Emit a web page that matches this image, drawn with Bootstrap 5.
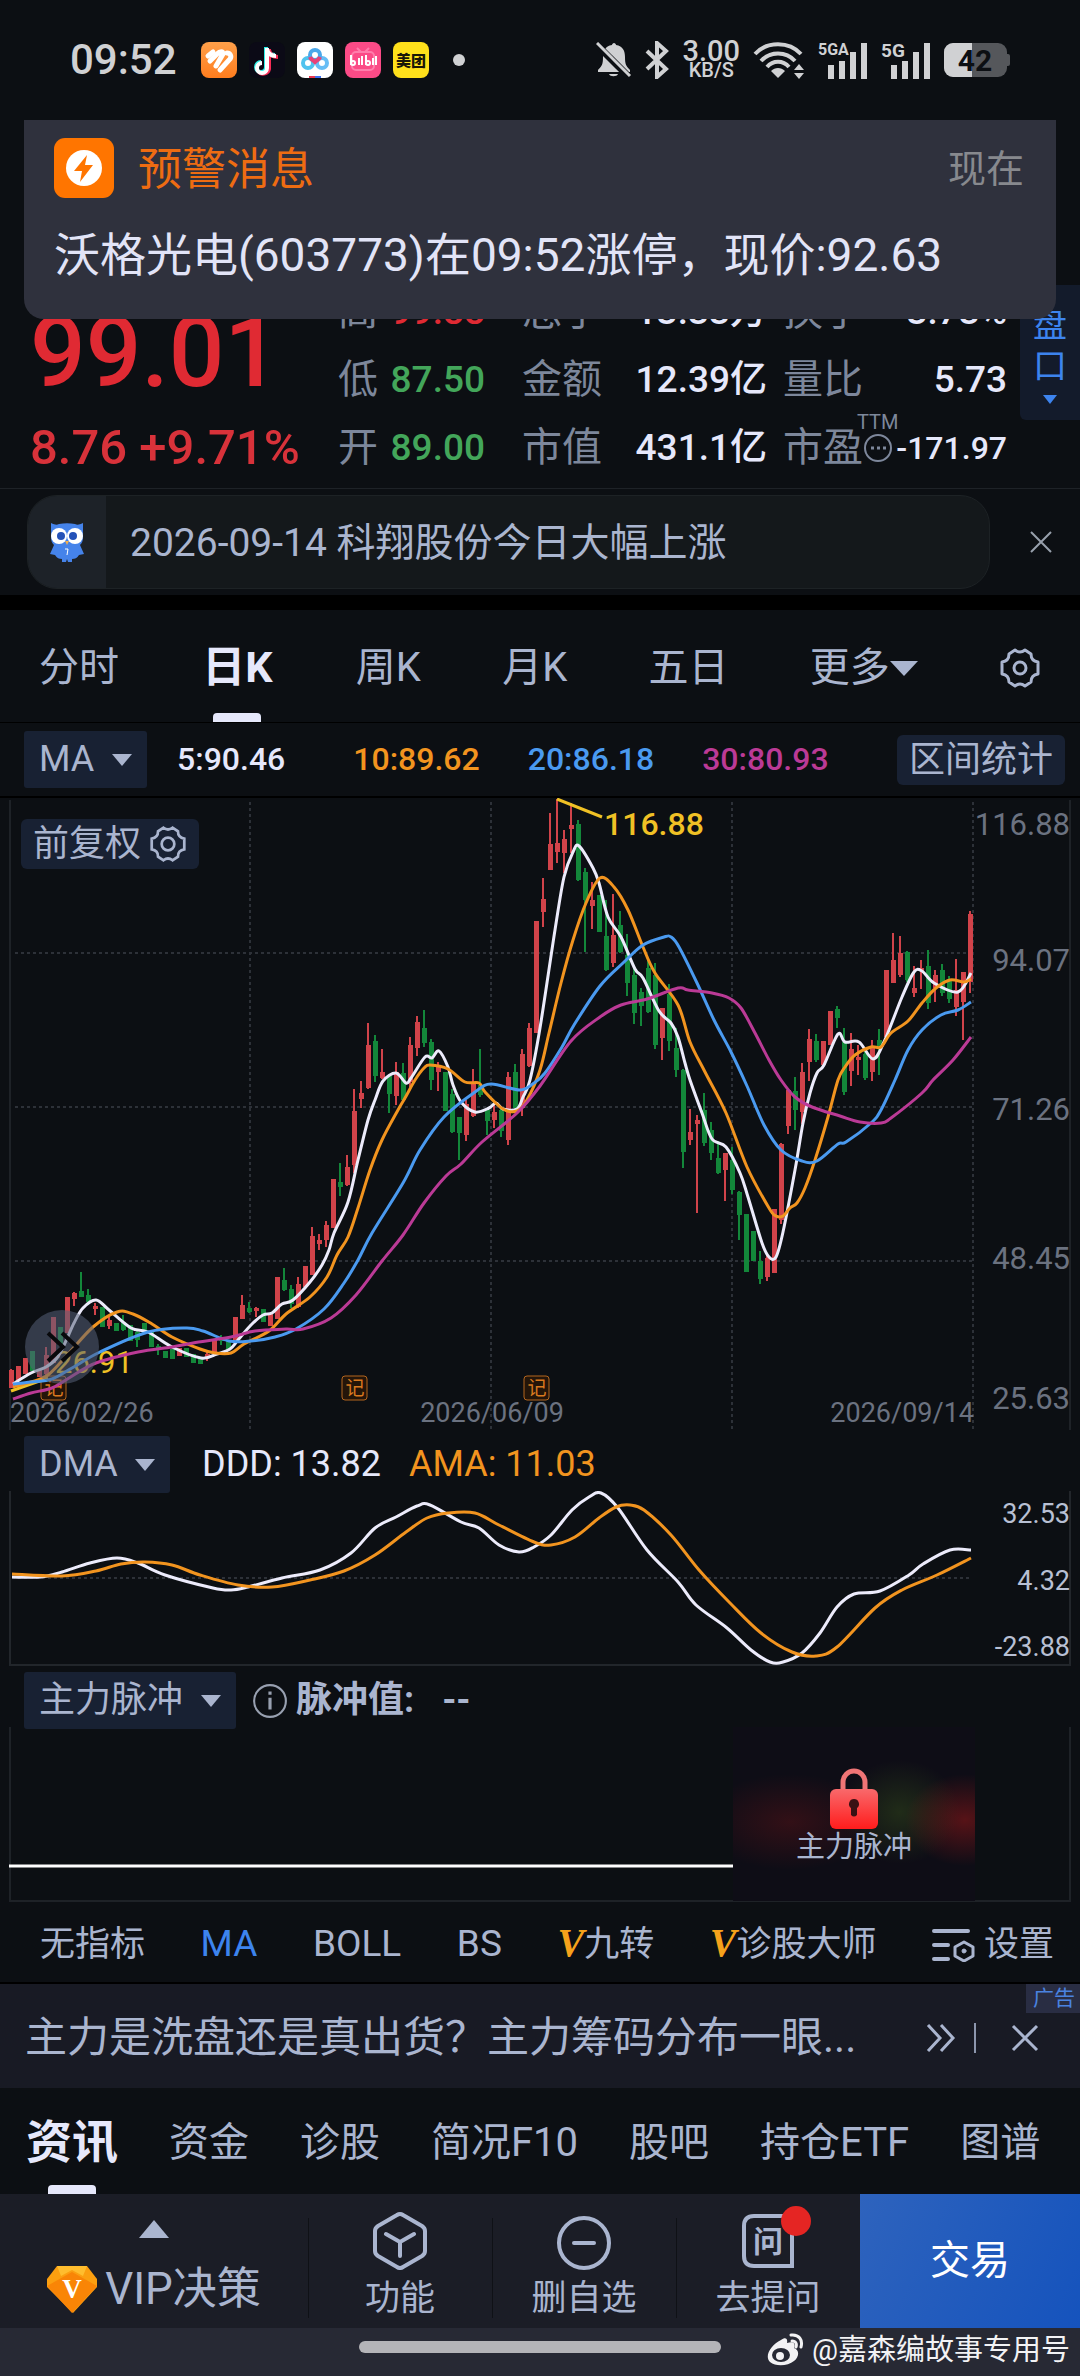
<!DOCTYPE html>
<html lang="zh-CN" data-bs-theme="dark">
<head>
<meta charset="utf-8">
<meta name="viewport" content="width=device-width, initial-scale=1">
<title>日K 行情</title>
<link href="https://cdn.jsdelivr.net/npm/bootstrap@5.3.0/dist/css/bootstrap.min.css" rel="stylesheet">
<style>
:root{--ink:#e6e8fb;--soft:#aab5cf;--dim:#7d879b;--axis:#6b7280;--up:#e02a33;--down:#43a65a;--amber:#f2941f;--sky:#4a9af0;--rose:#bb3a96;--chip:#182133;--line:#1e2227}
body{background:#0c0f13;color:var(--soft);font-family:Roboto,"Noto Sans CJK SC",sans-serif;font-size:40px;line-height:1.2}
a{color:inherit;text-decoration:none}
button{color:inherit}
svg{display:block;flex:none}
.plot svg{width:100%;height:auto}
.statusbar{height:120px;padding:0 70px;color:#d0d1d3}
.clock{font-size:42px;font-weight:500}
.speed{font-size:29px;line-height:20px;font-weight:500;text-align:center}
.speed small{font-size:20px;line-height:18px;display:block;font-weight:500}
.notice{top:120px;left:24px;right:24px;height:199px;background:#2f313d;border-radius:0 0 20px 20px;padding:18px 32px 0 30px;z-index:5}
.notice-title{color:#ee6c12;font-size:44px}
.notice-time{color:#87898e;font-size:38px}
.notice-text{color:#e2e4f7;font-size:46px;line-height:56px;margin-top:29px}
.quote{padding:158px 0 6px 30px;border-bottom:1px solid var(--line)}
.quote-grid{display:grid;grid-template-columns:308fr 184fr 261fr 224fr;grid-auto-rows:68px;align-items:center;margin-right:13px}
.price{grid-row:span 2;align-self:end;color:var(--up);font-size:98px;font-weight:500;line-height:68px;padding-bottom:27px}
.change{color:#d8323a;font-size:49px;font-weight:500;white-space:pre}
.pair{display:flex;justify-content:space-between;align-items:center;color:var(--dim);white-space:nowrap}
.pair b{font-size:37px;font-weight:500;color:var(--ink)}
.pair .tiny{font-size:32px}
.pe-a{padding-right:37px}.pe-b{padding-right:16px}
.red b{color:var(--up)}.green b{color:var(--down)}
.ttm{top:-14px;left:74px;font-size:20px}
.handicap{width:60px;align-self:stretch;margin-top:7px;margin-bottom:62px;background:#131b2b;color:#3d84ee;border:0;border-radius:0 0 0 6px;font-size:34px;line-height:41px;padding:4px 12px 0}
.tip{padding:6px 24px 6px 27px;border-bottom:15px solid #000}
.tip-pill{height:94px;border-radius:30px;background:#14181b;border:1px solid #1d2225;overflow:hidden;margin-right:36px}
.tip-owl{width:78px;background:#1d2228}
.tip-pill a{font-size:39px;margin-top:3px}
.tabs{height:113px;padding:4px 39px 0;border-bottom:1px solid #000}
.tabs a,.subtabs a{position:relative;height:100%;display:flex;align-items:center}
.tabs .active{color:var(--ink);font-size:43px;font-weight:700;padding:0 2px}
.active::after{content:"";position:absolute;left:50%;bottom:0;width:48px;height:9px;margin-left:-24px;border-radius:4px 4px 0 0;background:var(--ink)}
.marow{height:75px;padding:0 15px 0 24px;border-bottom:2px solid #000;font-size:32px;font-weight:500;gap:48px}
.ma-first{margin:0 20px 0 -18px}
.picker{background-color:var(--chip);border:0;border-radius:3px;color:var(--soft);width:auto;height:57px;font-size:36px;line-height:45px;padding:6px 52px 6px 15px;background-image:url("data:image/svg+xml,%3Csvg xmlns='http://www.w3.org/2000/svg' viewBox='0 0 20 12'%3E%3Cpath d='M0 0h20L10 12z' fill='%23aab5cf'/%3E%3C/svg%3E")!important;background-size:20px 12px;background-position:right 15px center}
.chip{background:var(--chip);border:0;border-radius:6px;font-size:36px;line-height:50px;padding:0 12px;font-weight:400}
.adjust{top:21px;left:21px;height:50px;z-index:2}
.c-amber{color:var(--amber)}.c-sky{color:var(--sky)}.c-rose{color:var(--rose)}.c-ink{color:var(--ink)}.c-blue{color:#3d84ee}
.subrow{padding:6px 24px 0;font-size:36px;margin-bottom:-2px;position:relative}
.indicators{height:82px;padding:5px 26px 0 40px;font-size:35px;border-bottom:2px solid #000}
.latin{font-size:37px}
.vee{font:italic 700 40px/1 "Liberation Serif",serif;color:#f6a21b}
.promo{height:104px;background:#181a24;padding:4px 40px 0 25px;font-size:42px}
.adtag{top:0;right:0;background:#292d43;color:#4a83e0;font-size:21px;line-height:29px;padding:0 5px 0 7px}
.subtabs{height:106px;padding:4px 0 0 26px;gap:51px;white-space:nowrap}
.subtabs .active{font-size:46px;font-weight:700;color:var(--ink)}
.dock{background:#1b1d26;height:134px}
.dock button{border:0;background:none;padding:0;display:flex;flex-direction:column;align-items:center;position:relative}
.dock button+button:not(.trade)::before{content:"";position:absolute;left:0;top:24px;bottom:10px;width:1px;background:#0f1116}
.vip{flex:308 1 0;font-size:44px;line-height:50px}
.tool{flex:184 1 0;font-size:35px;line-height:42px}
.trade{flex:220 1 0;justify-content:center;color:#fff;font-size:40px;background:linear-gradient(115deg,#2e63bd,#1553bd)!important}
.dot{width:30px;height:30px;background:#e52523;border-radius:50%;left:57%;top:12px}
.homebar{height:48px;background:#272934}
.handle{width:362px;height:12px;border-radius:6px;background:#b4b4b8;left:50%;top:13px;margin-left:-181px}
.credit{color:#f2f2f4;font-size:29px;right:10px;top:5px;gap:8px}
</style>
</head>
<body>
<main class="position-relative">

<header class="statusbar d-flex align-items-center">
  <span class="clock me-auto d-flex align-items-center gap-4">09:52
    <span class="d-flex align-items-center" style="gap:12px">
      <svg width="36" height="36" viewBox="0 0 36 36"><defs><linearGradient id="og" x2="0" y2="1"><stop stop-color="#ffa04a"/><stop offset="1" stop-color="#ff7d1e"/></linearGradient></defs><rect width="36" height="36" rx="8" fill="url(#og)"/><g stroke="#fff" stroke-width="5" stroke-linecap="round" fill="none"><path d="M7 14 12 10"/><path d="M9 19 16 12c3-3 6-3 6 0L15 24"/><path d="M19 28 29 17c2-3 0-6-3-6"/></g></svg>
      <svg width="36" height="36" viewBox="0 0 36 36"><rect width="36" height="36" rx="8" fill="#0b0a16"/><g fill="none" stroke-width="4"><path d="M17 5v20a5 5 0 1 1-5-5M17 6c1 5 4 7 9 7" stroke="#2cf0e8"/><path d="M20 7v20a6 6 0 0 1-10 3M20 8c1 5 4 7 9 7" stroke="#f72c56"/><path d="M18 6v20a5 5 0 1 1-5-5M18 7c1 5 4 7 9 7" stroke="#fff"/></g></svg>
      <svg width="36" height="36" viewBox="0 0 36 36"><rect width="36" height="36" rx="8" fill="#fff"/><g fill="none" stroke-width="4"><circle cx="11" cy="21" r="5" stroke="#4fc3ee"/><circle cx="25" cy="21" r="5" stroke="#66bdf5"/><circle cx="18" cy="13" r="5" stroke="#4aa7ea"/><path d="M13 15c1 3 3 3 5 5 2-2 4-2 5-5" stroke="#e84278"/></g><path d="M12 34h6v2h-6z" fill="#e8384f"/><path d="M18 34h6v2h-6z" fill="#3b6ff0"/></svg>
      <svg width="36" height="36" viewBox="0 0 36 36"><rect width="36" height="36" rx="8" fill="#fb4b87"/><g fill="none" stroke="#ff7eac" stroke-width="2"><rect x="7" y="10" width="22" height="18" rx="4"/><path d="m12 6 4 4m8-4-4 4"/></g><g stroke="#fff" stroke-width="2" fill="none"><path d="M6 13v10M14 16v7M17 14v9M21 13v10M28 16v7M31 14v9"/><circle cx="8" cy="21" r="2"/><circle cx="23" cy="21" r="2"/></g></svg>
      <svg width="36" height="36" viewBox="0 0 36 36"><rect width="36" height="36" rx="8" fill="#ffe01b"/><text x="18" y="24" font-size="15" font-weight="900" text-anchor="middle" fill="#1a1708">美团</text></svg>
    </span>
    <svg width="12" height="12"><circle cx="6" cy="6" r="6" fill="#d0d1d3"/></svg>
  </span>
  <span class="d-flex align-items-center" style="gap:13px">
    <svg width="36" height="36" viewBox="0 0 36 36" fill="#d0d1d3"><path d="M18 1c1 0 2 1 2 2 7 1 9 6 9 12 0 7 1 9 5 13v2H2v-2c4-4 5-6 5-13 0-6 2-11 9-12 0-1 1-2 2-2zM13 32h9c-1 3-8 3-9 0z"/><path d="M0 2 34 36" stroke="#0c0f13" stroke-width="7"/><path d="m1 1 33 33" stroke="#d0d1d3" stroke-width="3"/></svg>
    <svg width="24" height="38" viewBox="0 0 24 38" fill="none" stroke="#d0d1d3" stroke-width="4"><path d="m2 10 19 18-9 8V2l9 8L2 28"/></svg>
    <span class="speed">3.00<small>KB/S</small></span>
    <svg width="52" height="38" viewBox="0 0 52 38" fill="none" stroke="#d0d1d3" stroke-width="4"><path d="M2 13c12-13 34-13 46 0M8 20c9-10 25-10 34 0M14 26c6-7 16-7 22 0"/><path d="M25 37l-7-7c4-4 10-4 14 0z" fill="#d0d1d3" stroke="none"/><path d="m41 29 5-6 5 6zm0 3 5 6 5-6z" fill="#d0d1d3" stroke="none"/></svg>
    <svg width="50" height="38" viewBox="0 0 50 38" fill="#d0d1d3"><text x="0" y="14" font-size="16" font-weight="700" font-family="Roboto">5GA</text><path d="M10 24h6v14h-6zM21 20h6v18h-6zM32 11h6v27h-6zM43 2h6v36h-6z"/></svg>
    <svg width="50" height="38" viewBox="0 0 50 38" fill="#d0d1d3"><text x="0" y="16" font-size="19" font-weight="700" font-family="Roboto">5G</text><path d="M10 24h6v14h-6zM21 20h6v18h-6zM32 11h6v27h-6zM43 2h6v36h-6z"/></svg>
    <svg width="66" height="34" viewBox="0 0 66 34"><rect width="63" height="34" rx="9" fill="#55575b"/><path d="M62 11h2q2 0 2 2v8q0 2-2 2h-2z" fill="#55575b"/><path d="M9 0h19v34H9a9 9 0 0 1-9-9V9a9 9 0 0 1 9-9z" fill="#d0d1d3"/><text x="31" y="28" font-size="30" font-weight="700" text-anchor="middle" fill="#0c0f13">42</text></svg>
  </span>
</header>

<aside class="notice position-absolute">
  <div class="d-flex align-items-center">
    <svg width="60" height="60" viewBox="0 0 60 60"><rect width="60" height="60" rx="11" fill="#ff7500"/><circle cx="30" cy="30" r="18" fill="#fff"/><path d="M33 17 20 33h8l-2 11 13-17h-8z" fill="#ff7500"/></svg>
    <span class="notice-title ms-4 me-auto pt-1">预警消息</span>
    <span class="notice-time pt-1">现在</span>
  </div>
  <div class="notice-text text-nowrap">沃格光电(603773)在09:52涨停，现价:92.63</div>
</aside>

<section class="quote d-flex">
  <div class="quote-grid flex-grow-1">
    <div class="price">99.01</div>
    <div class="pair pe-a red">高<b>99.88</b></div>
    <div class="pair pe-b">总手<b>13.33万</b></div>
    <div class="pair">换手<b>3.73%</b></div>
    <div class="pair pe-a green">低<b>87.50</b></div>
    <div class="pair pe-b">金额<b>12.39亿</b></div>
    <div class="pair">量比<b>5.73</b></div>
    <div class="change">8.76 +9.71%</div>
    <div class="pair pe-a green">开<b>89.00</b></div>
    <div class="pair pe-b">市值<b>431.1亿</b></div>
    <div class="pair"><span class="position-relative d-flex align-items-center">市盈<span class="ttm position-absolute">TTM</span>
      <svg width="30" height="30" viewBox="0 0 30 30" fill="none" stroke="#7d879b" stroke-width="2"><circle cx="15" cy="15" r="13"/><path d="M8 15h3m3 0h3m3 0h3" stroke-width="3"/></svg></span><b class="tiny">-171.97</b></div>
  </div>
  <button class="handicap">盘口<svg class="mx-auto mt-2" width="14" height="9"><path d="M0 0h14L7 9z" fill="#3d84ee"/></svg></button>
</section>

<section class="tip d-flex align-items-center">
  <div class="tip-pill d-flex flex-grow-1">
    <span class="tip-owl d-flex align-items-center justify-content-center">
      <svg width="36" height="40" viewBox="0 0 36 40"><path d="M2 1c4 2 6 2 8 1 5-1 11-1 16 0 2 1 4 1 8-1v14c0 4-1 6-3 8l4 9-5 1c-2 3-4 4-7 4v3h-4l-1-3-1 3h-4v-3c-3 0-5-1-7-4l-5-1 4-9c-2-2-3-4-3-8z" fill="#4583ea"/><circle cx="10" cy="14" r="8" fill="#fff"/><circle cx="26" cy="14" r="8" fill="#fff"/><circle cx="12" cy="14" r="4" fill="#2452b8"/><circle cx="24" cy="14" r="4" fill="#2452b8"/><path d="m16 19 2 4 2-4z" fill="#f4b04f"/><path d="M16 27h3l-1 6" stroke="#fff" fill="none"/></svg>
    </span>
    <a class="d-flex align-items-center ms-4 text-nowrap" href="#">2026-09-14 科翔股份今日大幅上涨</a>
  </div>
  <button class="btn p-0 border-0" aria-label="关闭"><svg width="30" height="30" viewBox="0 0 30 30" stroke="#98a0ac" stroke-width="2"><path d="m5 5 20 20m0-20L5 25"/></svg></button>
</section>

<nav class="tabs d-flex justify-content-between align-items-center">
  <a href="#">分时</a><a href="#" class="active">日K</a><a href="#">周K</a><a href="#">月K</a><a href="#">五日</a>
  <a href="#">更多<svg width="28" height="15"><path d="M0 0h28L14 15z" fill="#aab5cf"/></svg></a>
  <a href="#" aria-label="设置"><svg width="42" height="42" viewBox="0 0 42 42" fill="none" stroke="#aab5cf" stroke-width="3" stroke-linejoin="round"><path id="cog" d="M16 3q5 4 10 0l6 4q0 7 7 8v12q-7 1-7 8l-6 4q-5-4-10 0l-6-4q0-7-7-8V15q7-1 7-8z"/><circle cx="21" cy="21" r="6"/></svg></a>
</nav>

<div class="marow d-flex align-items-center">
  <select class="form-select picker" aria-label="均线指标"><option>MA</option></select>
  <span class="c-ink ma-first">5:90.46</span><span class="c-amber">10:89.62</span><span class="c-sky">20:86.18</span><span class="c-rose">30:80.93</span>
  <button class="chip ms-auto">区间统计</button>
</div>

<section class="plot position-relative">
  <button class="chip adjust position-absolute d-flex align-items-center gap-2">前复权<svg style="width:38px" viewBox="0 0 42 42" fill="none" stroke="#aab5cf" stroke-width="3"><use href="#cog"/><circle cx="21" cy="21" r="7"/></svg></button>
  <svg id="kline" viewBox="0 798 1080 632" font-family="Roboto, 'Noto Sans CJK SC', sans-serif">
    <g stroke="#2d3138" stroke-width="2" stroke-dasharray="3 3"><path d="M15 953H973M15 1107H973M15 1261H973M250 802V1430M491 802V1430M732 802V1430M973 802V1430"/></g>
    <path d="M10 800V1430M1070 800V1430" stroke="#1e2227" stroke-width="2"/>
    <g fill="#6b7280" font-size="27"><text x="10" y="1422">2026/02/26</text><text x="492" y="1422" text-anchor="middle">2026/06/09</text><text x="974" y="1422" text-anchor="end">2026/09/14</text></g>
    <g fill="#6b7280" font-size="31" text-anchor="end"><text x="1070" y="835">116.88</text><text x="1070" y="971">94.07</text><text x="1070" y="1120">71.26</text><text x="1070" y="1269">48.45</text><text x="1070" y="1409">25.63</text></g>
    <g fill="#241509" stroke="#b3661f" stroke-width="1"><rect x="41" y="1376" width="25" height="24" rx="3"/><rect x="342" y="1376" width="25" height="24" rx="3"/><rect x="524" y="1376" width="25" height="24" rx="3"/></g>
    <g fill="#d9791f" font-size="19" text-anchor="middle"><text x="54" y="1395">记</text><text x="355" y="1395">记</text><text x="537" y="1395">记</text></g>
    <g id="candles"></g>
    <text x="55" y="1373" font-size="31" fill="#f0c125">26.91</text>
    <g fill="none" stroke-width="3" stroke-linejoin="round">
      <path d="M11 1391 48 1378" stroke="#f0c125"/>
      <polyline stroke="#ecebfb" points="13,1384 31,1373 46,1367 57,1358 65,1343 74,1323 83,1308 96,1300 109,1310 131,1328 148,1332 172,1347 201,1358 217,1354 230,1349 238,1340 251,1325 263,1315 272,1313 282,1304 293,1300 310,1282 322,1265 329,1250 334,1233 348,1202 358,1160 368,1120 375,1100 383,1081 396,1073 406,1083 411,1078 425,1057 432,1058 439,1051 448,1067 453,1085 461,1102 475,1112 489,1108 496,1103 503,1109 517,1109 523,1097 530,1080 540,1028 555,930 564,877 573,852 579,846 593,868 599,883 608,917 621,937 635,969 643,978 659,1011 671,1023 678,1037 685,1063 690,1080 702,1113 712,1139 726,1147 740,1173 748,1197 762,1243 769,1257 776,1257 783,1232 795,1170 803,1123 810,1093 817,1073 824,1065 838,1034 845,1042 859,1042 873,1059 884,1042 902,997 914,972 922,971 934,983 958,992 971,973"/>
      <polyline stroke="#f2941f" points="13,1387 31,1382 48,1375 69,1353 93,1327 117,1312 133,1314 152,1324 172,1337 200,1349 215,1353 231,1353 244,1344 269,1331 286,1314 310,1297 327,1277 337,1255 348,1237 358,1208 370,1170 382,1140 398,1110 405,1098 415,1080 424,1068 430,1065 448,1069 465,1082 479,1083 485,1092 503,1109 517,1111 527,1100 540,1070 549,1033 561,983 573,940 586,903 600,878 614,887 628,910 643,947 655,973 678,1005 690,1042 705,1072 726,1113 747,1167 769,1208 776,1216 783,1216 790,1208 797,1203 805,1188 815,1160 828,1117 838,1080 845,1067 855,1055 871,1047 881,1047 891,1033 908,1021 922,1003 936,988 950,980 964,982 971,979"/>
      <polyline stroke="#4a9af0" points="13,1384 31,1382 52,1379 72,1368 100,1352 148,1332 186,1328 203,1331 229,1341 251,1341 275,1337 296,1329 324,1309 344,1283 358,1260 372,1233 403,1183 420,1150 444,1117 475,1092 491,1084 520,1090 534,1083 545,1073 562,1047 574,1025 600,986 623,963 643,945 664,937 671,937 679,947 697,983 714,1020 731,1052 747,1086 764,1125 781,1150 802,1161 817,1161 838,1144 846,1142 871,1123 881,1110 895,1080 908,1050 922,1030 941,1015 958,1010 971,1002"/>
      <polyline stroke="#bb3a96" points="13,1399 31,1393 52,1388 69,1378 96,1363 138,1352 172,1347 193,1343 231,1337 255,1331 286,1329 303,1329 331,1318 356,1295 382,1261 403,1235 424,1203 446,1176 461,1164 482,1142 517,1113 540,1086 571,1041 600,1017 621,1005 647,999 678,988 688,990 712,993 729,998 741,1008 755,1033 769,1060 781,1080 795,1097 812,1107 840,1116 860,1122 881,1123 891,1118 922,1093 933,1080 953,1060 971,1037"/>
    </g>
    <path d="M557 799 602 817" stroke="#f0c125" stroke-width="3"/><text x="604" y="835" font-size="32" font-weight="500" fill="#f0c125">116.88</text>
    <circle cx="62" cy="1347" r="37" fill="#556078" fill-opacity=".55"/>
    <path d="m48 1333 15 14-15 14m14-28 15 14-15 14" fill="none" stroke="#08090c" stroke-width="4"/>
  </svg>
</section>

<div class="subrow d-flex align-items-center">
  <select class="form-select picker" aria-label="副图指标"><option>DMA</option></select>
  <span class="c-ink ms-4 ps-2">DDD: 13.82</span><span class="c-amber ms-4 ps-1">AMA: 11.03</span>
</div>
<section class="plot">
  <svg viewBox="0 1491 1080 175" font-family="Roboto">
    <path d="M10 1491V1665H1070V1491" fill="none" stroke="#22262b" stroke-width="2"/>
    <path d="M12 1578H972" stroke="#2d3138" stroke-width="2" stroke-dasharray="3 3"/>
    <g fill="#b8c0d4" font-size="27" text-anchor="end"><text x="1070" y="1523">32.53</text><text x="1070" y="1590">4.32</text><text x="1070" y="1656">-23.88</text></g>
    <g fill="none" stroke-width="3" stroke-linejoin="round">
      <polyline stroke="#ecebfb" points="12,1577 41,1577 62,1572 90,1563 117,1558 138,1563 165,1575 213,1588 231,1590 248,1587 282,1578 320,1570 351,1553 375,1528 396,1517 417,1506 430,1505 461,1522 479,1528 499,1545 519,1552 534,1547 551,1535 572,1510 589,1497 601,1493 618,1508 647,1550 678,1582 696,1605 727,1628 751,1650 770,1662 783,1662 802,1653 820,1633 837,1607 854,1594 880,1591 909,1575 923,1564 950,1550 971,1550"/>
      <polyline stroke="#f2941f" points="12,1574 62,1576 96,1571 121,1564 145,1562 172,1565 200,1575 238,1585 272,1587 310,1580 344,1571 375,1555 406,1532 427,1518 448,1513 475,1513 499,1525 534,1542 551,1545 575,1537 599,1518 616,1507 630,1505 644,1510 671,1535 699,1570 730,1603 761,1633 792,1652 816,1656 837,1647 875,1608 902,1590 937,1575 971,1558"/>
    </g>
  </svg>
</section>

<div class="subrow d-flex align-items-center">
  <select class="form-select picker" aria-label="资金指标"><option>主力脉冲</option></select>
  <svg class="ms-3" width="36" height="36" viewBox="0 0 34 34" fill="none" stroke="#98a0b0" stroke-width="2"><circle cx="17" cy="17" r="15"/><path d="M17 14v11M17 8v3" stroke-width="3"/></svg>
  <span class="ms-2 fw-bold">脉冲值:</span><span class="ms-4 ps-1 fw-bold">--</span>
</div>
<section class="plot">
  <svg viewBox="0 1727 1080 175" font-family="Roboto, 'Noto Sans CJK SC', sans-serif">
    <defs><radialGradient id="gr"><stop stop-color="#a01818" stop-opacity=".5"/><stop offset="1" stop-color="#a01818" stop-opacity="0"/></radialGradient><radialGradient id="gg"><stop stop-color="#3c5a1c" stop-opacity=".4"/><stop offset="1" stop-color="#3c5a1c" stop-opacity="0"/></radialGradient><linearGradient id="lk" x2="0" y2="1"><stop stop-color="#f9696b"/><stop offset="1" stop-color="#ff1c1c"/></linearGradient><clipPath id="box"><path d="M733 1727h242v174H733z"/></clipPath></defs>
    <path d="M10 1727V1901H1070V1727" fill="none" stroke="#1e2227" stroke-width="2"/>
    <path d="M9 1866H733" stroke="#fff" stroke-width="3"/>
    <path d="M733 1727h242v174H733z" fill="#0e0d16"/>
    <g clip-path="url(#box)"><ellipse cx="790" cy="1822" rx="90" ry="48" fill="url(#gr)" opacity=".5"/><ellipse cx="900" cy="1812" rx="60" ry="52" fill="url(#gg)"/><ellipse cx="965" cy="1820" rx="60" ry="46" fill="url(#gr)"/></g>
    <path d="M843 1792v-10a11 11 0 0 1 22 0v10" fill="none" stroke="#f07576" stroke-width="5"/><rect x="830" y="1789" width="48" height="40" rx="6" fill="url(#lk)"/><path d="M854 1799a5 5 0 0 1 3 9v7q-3 3-6 0v-7a5 5 0 0 1 3-9z" fill="#3a1114"/>
    <text x="854" y="1857" font-size="29" text-anchor="middle" fill="#aab5cf">主力脉冲</text>
  </svg>
</section>

<nav class="indicators d-flex justify-content-between align-items-center text-nowrap">
  <a href="#">无指标</a><a href="#" class="c-blue latin">MA</a><a href="#" class="latin">BOLL</a><a href="#" class="latin">BS</a>
  <a href="#"><span class="vee">V</span>九转</a><a href="#"><span class="vee">V</span>诊股大师</a>
  <a href="#" class="d-flex align-items-center gap-2"><svg width="44" height="34" viewBox="0 0 44 34" fill="none" stroke="#aab5cf" stroke-width="4" stroke-linecap="round"><path d="M2 3h34M2 17h14M2 31h14"/><path d="M32 14l9 5v9l-9 5-9-5v-9z" stroke-width="3" stroke-linejoin="round"/><circle cx="32" cy="23" r="2" fill="#aab5cf" stroke-width="1"/></svg>设置</a>
</nav>

<section class="promo position-relative d-flex align-items-center">
  <a href="#" class="text-truncate me-auto">主力是洗盘还是真出货？主力筹码分布一眼...</a>
  <svg width="30" height="30" viewBox="0 0 30 30" fill="none" stroke="#aab5cf" stroke-width="3"><path d="m2 2 12 13L2 28M15 2l12 13-12 13"/></svg>
  <svg class="ms-3" width="6" height="30"><path d="M3 0v30" stroke="#8c96ad" stroke-width="2"/></svg>
  <button class="btn p-0 border-0 ms-4" aria-label="关闭广告"><svg class="ms-2" width="30" height="30" viewBox="0 0 30 30" stroke="#aab5cf" stroke-width="3"><path d="m3 3 24 24m0-24L3 27"/></svg></button>
  <span class="adtag position-absolute">广告</span>
</section>

<nav class="subtabs d-flex align-items-center">
  <a href="#" class="active">资讯</a><a href="#">资金</a><a href="#">诊股</a><a href="#">简况F10</a><a href="#">股吧</a><a href="#">持仓ETF</a><a href="#">图谱</a>
</nav>

<footer>
  <div class="dock d-flex">
    <button class="vip"><svg class="mt-4 mb-4" width="30" height="22" viewBox="0 0 30 22"><path d="M0 20h30L15 2z" fill="#aab5cf"/></svg>
      <span class="d-flex align-items-center"><svg class="me-2" width="50" height="47" viewBox="0 0 50 47"><path d="M10 0h30l10 13v8L26 47 0 21v-8z" fill="#fb9f10"/><path d="M10 0h30l-4 10-11-6-11 6z" fill="#ffbd2e"/><path d="m0 20 25-14 25 14-25 27z" fill="#f98506"/><text x="25" y="32" text-anchor="middle" font-family="Liberation Serif" font-weight="700" font-size="27" fill="#fff">V</text></svg>VIP决策</span></button>
    <button class="tool"><svg class="mt-3 mb-2" width="56" height="60" viewBox="0 0 56 60" fill="none" stroke="#aab5cf" stroke-width="4" stroke-linecap="round" stroke-linejoin="round"><path d="M25 5q3-2 6 0l19 11q3 2 3 5v20q0 3-3 5L31 57q-3 2-6 0L6 46q-3-2-3-5V21q0-3 3-5zM14 24l14 8 14-8M28 32v14"/></svg>功能</button>
    <button class="tool"><svg class="mt-3 mb-2" width="60" height="60" viewBox="0 0 60 60" fill="none" stroke="#aab5cf" stroke-width="4" stroke-linecap="round"><circle cx="30" cy="33" r="25"/><path d="M20 33h20"/></svg>删自选</button>
    <button class="tool"><svg class="mt-3 mb-2" width="56" height="60" viewBox="0 0 56 60"><path d="M14 6h28q10 0 10 10v40H14Q4 56 4 46V16Q4 6 14 6z" fill="none" stroke="#aab5cf" stroke-width="4"/><text x="28" y="42" font-size="30" font-weight="700" text-anchor="middle" fill="#aab5cf">问</text></svg>去提问<span class="dot position-absolute"></span></button>
    <button class="trade">交易</button>
  </div>
  <div class="homebar position-relative">
    <span class="handle position-absolute"></span>
    <span class="credit position-absolute d-flex align-items-center"><svg width="38" height="34" viewBox="0 0 38 34"><path d="M15 7c4-3 7-2 6 3 6-2 9 0 7 5 6 2 5 9 0 13-6 5-18 6-24 1C-2 23 5 12 15 7z" fill="#f2f2f4"/><ellipse cx="15" cy="22" rx="9" ry="7" fill="#272934"/><circle cx="14" cy="23" r="4" fill="#f2f2f4"/><path d="M25 2c8-1 12 5 10 12M26 8c4 0 5 3 4 6" fill="none" stroke="#f2f2f4" stroke-width="3" stroke-linecap="round"/></svg>@嘉森编故事专用号</span>
  </div>
</footer>
</main>

<script src="https://cdn.jsdelivr.net/npm/bootstrap@5.3.0/dist/js/bootstrap.bundle.min.js"></script>
<script>
// One entry per trading day: colour, wick top, wick bottom, then optional body top and bottom
const days = `r1369 1388 1370 1388,r1366 1380,r1358 1374,g1351 1371,r1370 1377,r1347 1375 1355 1374,r1317 1363,g1327 1346,r1297 1333,r1292 1306 1293 1299,
g1272 1297 1291 1297,g1289 1303 1295 1302,r1303 1315 1306 1309,g1307 1327,r1315 1329 1320 1326,g1323 1331,g1315 1331 1322 1330,g1325 1341,g1330 1347 1332 1340,g1323 1333,
g1332 1347,g1344 1355 1346 1349,g1351 1358,g1349 1359,r1348 1356,g1348 1357,g1354 1363,g1357 1364,r1350 1361 1354 1358,r1340 1353,
g1335 1345 1337 1341,g1340 1349,r1317 1340,r1295 1319 1305 1319,g1302 1313 1308 1312,r1307 1317 1308 1311,g1309 1322,r1313 1326,r1277 1319,g1268 1291 1280 1290,
g1285 1308 1289 1304,r1277 1308 1284 1307,r1266 1287,r1227 1275 1236 1275,r1234 1250 1240 1244,r1221 1247 1225 1240,r1179 1228,g1163 1196 1182 1187,r1155 1186 1167 1185,r1089 1173 1111 1165,
r1081 1108 1093 1099,r1023 1089 1045 1088,g1035 1082 1041 1076,r1049 1079 1072 1078,g1075 1113 1076 1094,r1062 1105 1072 1096,g1063 1102 1073 1100,r1037 1087 1045 1082,r1016 1056 1022 1048,g1010 1047 1028 1043,
g1039 1090 1042 1080,r1062 1091 1066 1072,g1072 1111,g1089 1133 1094 1132,g1117 1160 1117 1133,r1100 1141 1104 1135,r1069 1117 1083 1116,g1049 1097 1085 1095,g1108 1135 1110 1121,r1104 1128 1112 1120,
g1108 1137 1110 1131,r1072 1145 1077 1140,g1064 1110 1072 1108,r1049 1116 1054 1108,r1023 1067 1028 1066,r921 1033,r878 927 899 912,r813 870 844 870,r799 863 843 852,r830 873 839 853,
r803 853 825 829,g820 881 824 880,g868 952 872 900,r882 929 900 906,g895 932,g900 971 936 970,r894 967 935 963,g911 953 925 952,g934 996 955 983,g967 1024 975 1013,
g988 1026 992 1006,g960 1013 968 1012,g963 1049 975 1045,r1008 1060 1008 1038,g984 1051 994 1041,g1028 1077 1048 1070,g1069 1168 1070 1152,r1109 1145 1132 1140,r1115 1213 1120 1124,g1093 1146 1110 1143,
g1122 1160 1130 1153,g1141 1174 1158 1173,r1153 1201 1153 1170,g1147 1194 1160 1190,g1191 1240 1192 1215,g1214 1272,g1231 1261,g1251 1284 1261 1279,r1255 1281 1258 1277,r1209 1273,
r1143 1224 1144 1220,r1090 1134 1090 1126,g1077 1130 1091 1110,r1063 1124 1072 1112,r1029 1081 1039 1062,g1034 1062 1041 1060,r1041 1065,r1011 1045,g1006 1028 1009 1018,g1028 1095 1042 1092,
r1033 1086 1049 1071,r1045 1075 1057 1060,g1050 1080 1054 1078,r1040 1081 1048 1072,g1029 1075 1040 1047,r970 1037,r933 983 960 983,r936 977 953 975,g951 982 952 980,r966 997 988 993,
r960 989 968 971,g950 1009 966 1003,r970 1002 975 988,g964 996 970 993,g976 1003 979 999,r959 1016 990 1007,r972 1040 972 1002,r911 993 914 982`.replace(/\n/g, '').split(',');
document.getElementById('candles').innerHTML = days.map((d, i) => {
  const x = 11 + 7 * i, fill = d[0] === 'r' ? '#d1434a' : '#13873a';
  const [top, low, bodyTop = top, bodyLow = low] = d.slice(1).split(' ').map(Number);
  return `<path d="M${x - 1} ${top}h2V${low}h-2zM${x - 2} ${bodyTop}h5V${bodyLow}h-5z" fill="${fill}"/>`;
}).join('');

// Turn each indicator polyline into a smooth curve through its points
document.querySelectorAll('.plot polyline').forEach(line => {
  const p = line.getAttribute('points').split(' ').map(s => s.split(',').map(Number));
  let d = `M${p[0]}`;
  for (let i = 0; i < p.length - 1; i++) {
    const a = p[i - 1] || p[i], b = p[i], c = p[i + 1], e = p[i + 2] || c;
    d += `C${b[0] + (c[0] - a[0]) / 6} ${b[1] + (c[1] - a[1]) / 6} ${c[0] - (e[0] - b[0]) / 6} ${c[1] - (e[1] - b[1]) / 6} ${c[0]} ${c[1]}`;
  }
  const path = document.createElementNS('http://www.w3.org/2000/svg', 'path');
  path.setAttribute('d', d);
  path.setAttribute('stroke', line.getAttribute('stroke'));
  line.replaceWith(path);
});
</script>
</body>
</html>
